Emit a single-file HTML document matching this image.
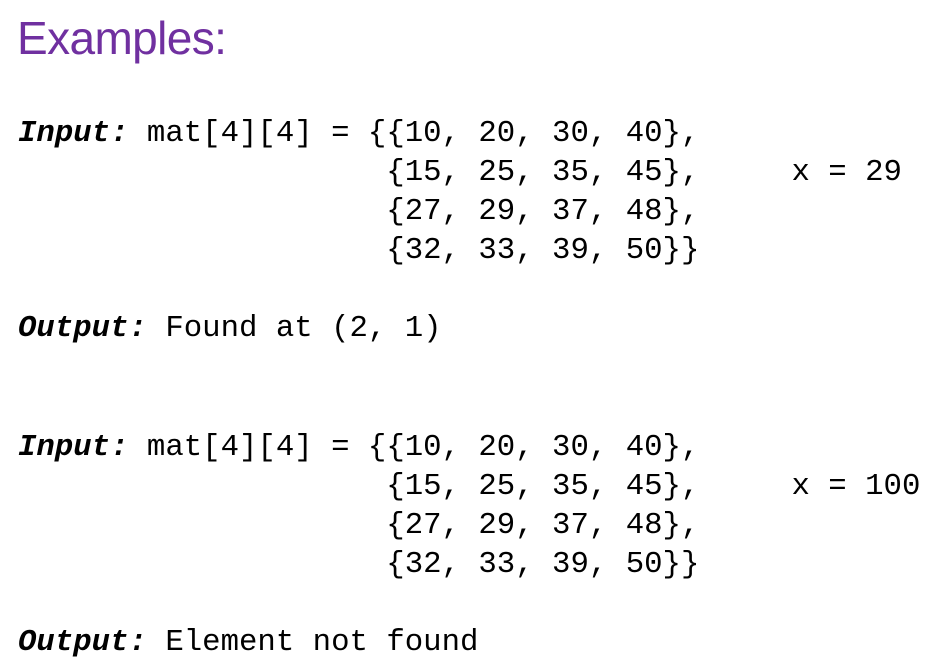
<!DOCTYPE html>
<html><head><meta charset="utf-8"><style>
html,body{margin:0;padding:0;background:#fff;width:946px;height:672px;overflow:hidden;position:relative}
.t{position:absolute;left:17px;top:11px;font-family:"Liberation Sans",sans-serif;font-size:46px;color:#7030A0;letter-spacing:-0.6px}
.l{position:absolute;left:18px;font-family:"Liberation Mono",monospace;font-size:30.7px;color:#000;white-space:pre;line-height:39px}
b{font-style:italic}
</style></head><body>
<div class="t">Examples:</div>
<div class="l" style="top:114px"><b>Input:</b> mat[4][4] = {{10, 20, 30, 40},
                    {15, 25, 35, 45},     x = 29
                    {27, 29, 37, 48},
                    {32, 33, 39, 50}}</div>
<div class="l" style="top:309px"><b>Output:</b> Found at (2, 1)</div>
<div class="l" style="top:428px"><b>Input:</b> mat[4][4] = {{10, 20, 30, 40},
                    {15, 25, 35, 45},     x = 100
                    {27, 29, 37, 48},
                    {32, 33, 39, 50}}</div>
<div class="l" style="top:623px"><b>Output:</b> Element not found</div>
</body></html>
